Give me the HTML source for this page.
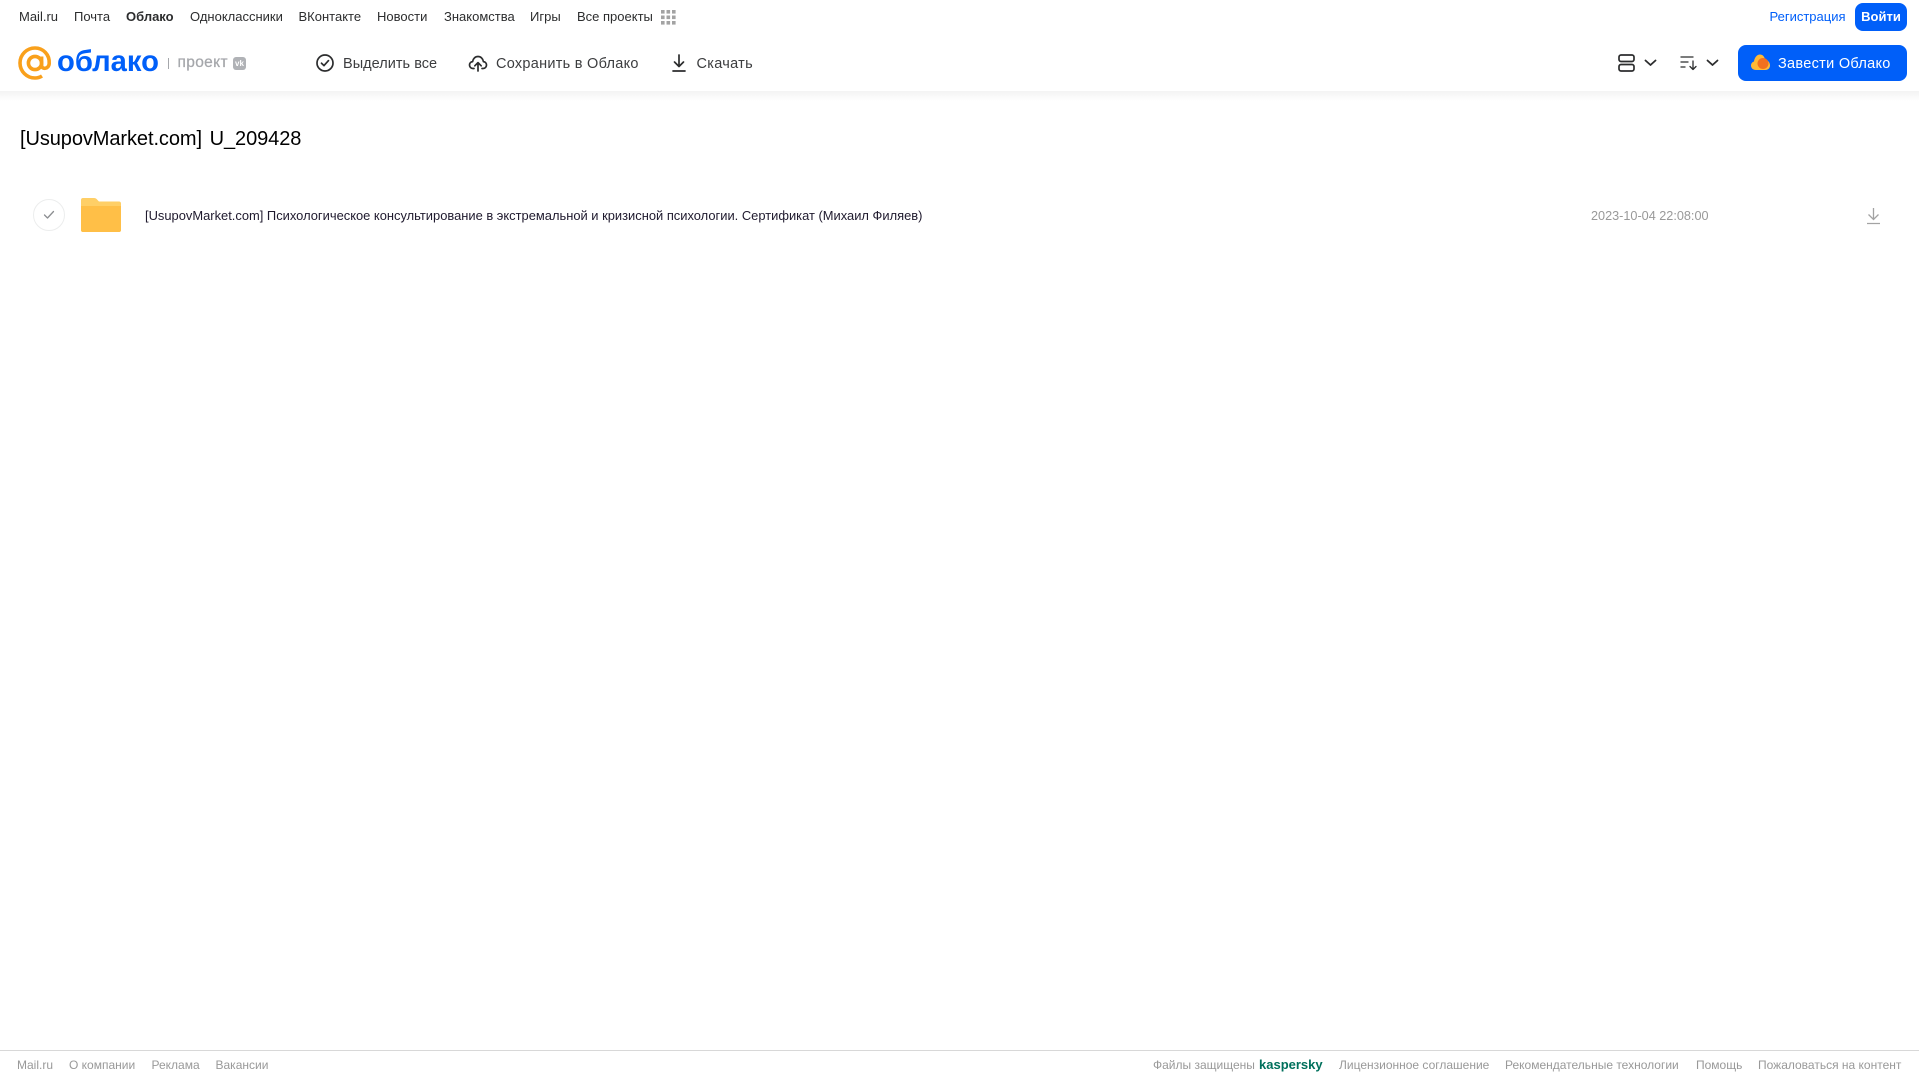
<!DOCTYPE html>
<html lang="ru">
<head>
<meta charset="utf-8">
<title>Облако</title>
<style>
html,body{margin:0;padding:0;background:#fff;}
body{width:1919px;height:1079px;position:relative;overflow:hidden;font-family:"Liberation Sans",Arial,sans-serif;}
.t{position:absolute;white-space:nowrap;line-height:20px;height:20px;}
.n{font-size:13px;color:#2c2d2e;top:7px;}
.b{font-size:14.5px;color:#3c3d3f;top:53.5px;letter-spacing:.3px;}
.f{font-size:12px;color:#999;top:1055px;}
svg{position:absolute;display:block;overflow:visible;}
</style>
</head>
<body>
<div style="position:absolute;left:0;top:91px;width:1919px;height:10px;background:linear-gradient(#f3f3f3,#fff);"></div>

<span class="t n" style="left:19px;">Mail.ru</span>
<span class="t n" style="left:74px;">Почта</span>
<span class="t n" style="left:126px;font-weight:bold;">Облако</span>
<span class="t n" style="left:190px;">Одноклассники</span>
<span class="t n" style="left:298.5px;">ВКонтакте</span>
<span class="t n" style="left:377px;">Новости</span>
<span class="t n" style="left:444px;">Знакомства</span>
<span class="t n" style="left:530px;">Игры</span>
<span class="t n" style="left:577px;">Все проекты</span>
<svg style="left:661px;top:10px;" width="15" height="15" viewBox="0 0 15 15" fill="#a3a3a3">
<rect x="0" y="0" width="3.6" height="3.6"/><rect x="5.5" y="0" width="3.6" height="3.6"/><rect x="11" y="0" width="3.6" height="3.6"/>
<rect x="0" y="5.5" width="3.6" height="3.6"/><rect x="5.5" y="5.5" width="3.6" height="3.6"/><rect x="11" y="5.5" width="3.6" height="3.6"/>
<rect x="0" y="11" width="3.6" height="3.6"/><rect x="5.5" y="11" width="3.6" height="3.6"/><rect x="11" y="11" width="3.6" height="3.6"/>
</svg>

<span class="t n" style="left:1769.5px;color:#005ff9;">Регистрация</span>
<div style="position:absolute;left:1855px;top:3px;width:52px;height:28px;border-radius:8px;background:#005ff9;color:#fff;font-size:13px;font-weight:bold;line-height:28px;text-align:center;">Войти</div>

<svg style="left:18px;top:46px;" width="34" height="34" viewBox="0 0 34 34" fill="none" stroke="#f9a01b" stroke-width="3.6">
<circle cx="17" cy="17" r="6.6"/>
<path d="M23.6 10.5V19.5C23.6 23.5 30.8 23.5 31.2 17.5C31.8 8.5 25 2 17 2C8.7 2 2 8.7 2 17C2 25.3 8.7 32 17 32C19.8 32 22 31.3 24 30"/>
</svg>
<span class="t" style="left:57px;top:45.5px;height:32px;line-height:32px;font-size:29.2px;font-weight:bold;color:#005ff9;">облако</span>
<div style="position:absolute;left:168px;top:58px;width:1px;height:11px;background:#a5a7ab;"></div>
<span class="t" style="left:177.500px;top:53px;font-size:15.5px;color:#a5a7ab;letter-spacing:.35px;-webkit-text-stroke:.25px #a5a7ab;">проект</span>
<div style="position:absolute;left:233px;top:57px;width:13px;height:13px;border-radius:3px;background:#b0b2b6;color:#fff;font-size:8px;font-weight:bold;line-height:13px;text-align:center;">vk</div>

<svg style="left:315px;top:53px;" width="20" height="20" viewBox="0 0 20 20" fill="none" stroke="#2c2d2e" stroke-width="1.7">
<circle cx="10" cy="10" r="8"/><path d="M6.5 10.2L9 12.6L13.5 7.6" stroke-linecap="round" stroke-linejoin="round"/>
</svg>
<span class="t b" style="left:343px;letter-spacing:.03px;">Выделить все</span>

<svg style="left:468px;top:53px;" width="20" height="20" viewBox="0 0 20 20" fill="none" stroke="#2c2d2e" stroke-width="1.7" stroke-linecap="round" stroke-linejoin="round">
<path d="M6 15.5H5C2.8 15.5 1.5 13.8 1.5 12C1.5 10.2 2.8 8.8 4.6 8.6C5.1 5.6 7.300 3.500 10 3.500C12.700 3.500 14.900 5.600 15.400 8.600C17.200 8.800 18.500 10.200 18.500 12C18.500 13.800 17.200 15.500 15 15.500H14"/>
<path d="M10 18V10M6.800 12.800L10 9.600L13.200 12.800"/>
</svg>
<span class="t b" style="left:496px;letter-spacing:.27px;">Сохранить в Облако</span>

<svg style="left:670px;top:53px;" width="18" height="20" viewBox="0 0 18 20" fill="none" stroke="#2c2d2e" stroke-width="1.7" stroke-linecap="round" stroke-linejoin="round">
<path d="M9 2V13.500M4.500 9L9 13.500L13.500 9M3 18H15"/>
</svg>
<span class="t b" style="left:696.500px;">Скачать</span>

<svg style="left:1618px;top:54px;" width="17" height="18" viewBox="0 0 17 18" fill="none" stroke="#2c2d2e" stroke-width="1.7">
<rect x="1" y="1" width="15" height="6.500" rx="2"/><rect x="1" y="10.500" width="15" height="6.500" rx="2"/>
</svg>
<svg style="left:1644px;top:59px;" width="13" height="8" viewBox="0 0 13 8" fill="none" stroke="#2c2d2e" stroke-width="1.8" stroke-linecap="round" stroke-linejoin="round"><path d="M1.500 1.500L6.500 6L11.500 1.500"/></svg>
<svg style="left:1680px;top:55px;" width="18" height="16" viewBox="0 0 18 16" fill="none" stroke="#2c2d2e" stroke-width="1.300" stroke-linecap="round" stroke-linejoin="round">
<path d="M1 2H13M1 7H8M1 12H5M13 6V14.500M10 11.500L13 14.500L16 11.500"/>
</svg>
<svg style="left:1706px;top:59px;" width="13" height="8" viewBox="0 0 13 8" fill="none" stroke="#2c2d2e" stroke-width="1.8" stroke-linecap="round" stroke-linejoin="round"><path d="M1.500 1.500L6.500 6L11.500 1.500"/></svg>

<div style="position:absolute;left:1738px;top:45px;width:169px;height:36px;border-radius:8px;background:#005ff9;"></div>
<svg style="left:1751px;top:54px;" width="19" height="17" viewBox="0 0 19 17">
<path d="M5 16C2 16 0 14 0 11.500C0 9.500 1.300 8 3 7.500C3.500 3.500 6 0.500 9 0.500C11.500 0.500 13.500 2.500 14 5.500C17 6 19 8.500 19 11.500C19 14 17 16 14.500 16Z" fill="#ffb936"/>
<circle cx="12" cy="9.500" r="5.500" fill="#f2701f"/>
</svg>
<span class="t" style="left:1778px;top:53.5px;font-size:14.5px;color:#fff;letter-spacing:.3px;">Завести Облако</span>

<span class="t" style="left:20px;top:127px;height:24px;line-height:24px;font-size:20px;color:#000;word-spacing:2.200px;letter-spacing:-.08px;">[UsupovMarket.com] U_209428</span>

<div style="position:absolute;left:33px;top:199px;width:30px;height:30px;border:1px solid #eceded;border-radius:50%;"></div>
<svg style="left:43px;top:210px;" width="12" height="10" viewBox="0 0 12 10" fill="none" stroke="#8c8e91" stroke-width="1.300" stroke-linecap="round" stroke-linejoin="round"><path d="M1.500 5L4.500 8L10.500 1.500"/></svg>

<svg style="left:81px;top:198px;" width="40" height="34" viewBox="0 0 40 34">
<path d="M2 0H13C14.500 0 15.500 .8 16.500 2L18 3.500H38C39.200 3.500 40 4.300 40 5.500V32C40 33.200 39.200 34 38 34H2C.8 34 0 33.200 0 32V2C0 .8 .8 0 2 0Z" fill="#ffcf66"/>
<path d="M0 8H40V32C40 33.200 39.200 34 38 34H2C.8 34 0 33.200 0 32Z" fill="#ffbf47"/>
</svg>

<span class="t" style="left:145px;top:206px;font-size:12.910px;color:#1f1a2e;">[UsupovMarket.com] Психологическое консультирование в экстремальной и кризисной психологии. Сертификат (Михаил Филяев)</span>
<span class="t" style="left:1591px;top:206px;font-size:12.660px;color:#999;">2023-10-04 22:08:00</span>
<svg style="left:1866px;top:207px;" width="15" height="18" viewBox="0 0 15 18" fill="none" stroke="#a3a3a3" stroke-width="1.300">
<path d="M7.500 1V12M2.500 7.500L7.500 12.500L12.500 7.500M1 16.500H14"/>
</svg>

<div style="position:absolute;left:0;top:1050px;width:1919px;height:1px;background:#d8d8d8;"></div>
<span class="t f" style="left:17px;">Mail.ru</span>
<span class="t f" style="left:69px;">О компании</span>
<span class="t f" style="left:151.500px;">Реклама</span>
<span class="t f" style="left:215.500px;">Вакансии</span>
<span class="t f" style="left:1153px;">Файлы защищены</span>
<span class="t" style="left:1259px;top:1055px;font-size:13px;font-weight:bold;color:#00705c;">kaspersky</span>
<span class="t f" style="left:1339px;">Лицензионное соглашение</span>
<span class="t f" style="left:1505px;">Рекомендательные технологии</span>
<span class="t f" style="left:1696px;">Помощь</span>
<span class="t f" style="left:1758px;">Пожаловаться на контент</span>
</body>
</html>
